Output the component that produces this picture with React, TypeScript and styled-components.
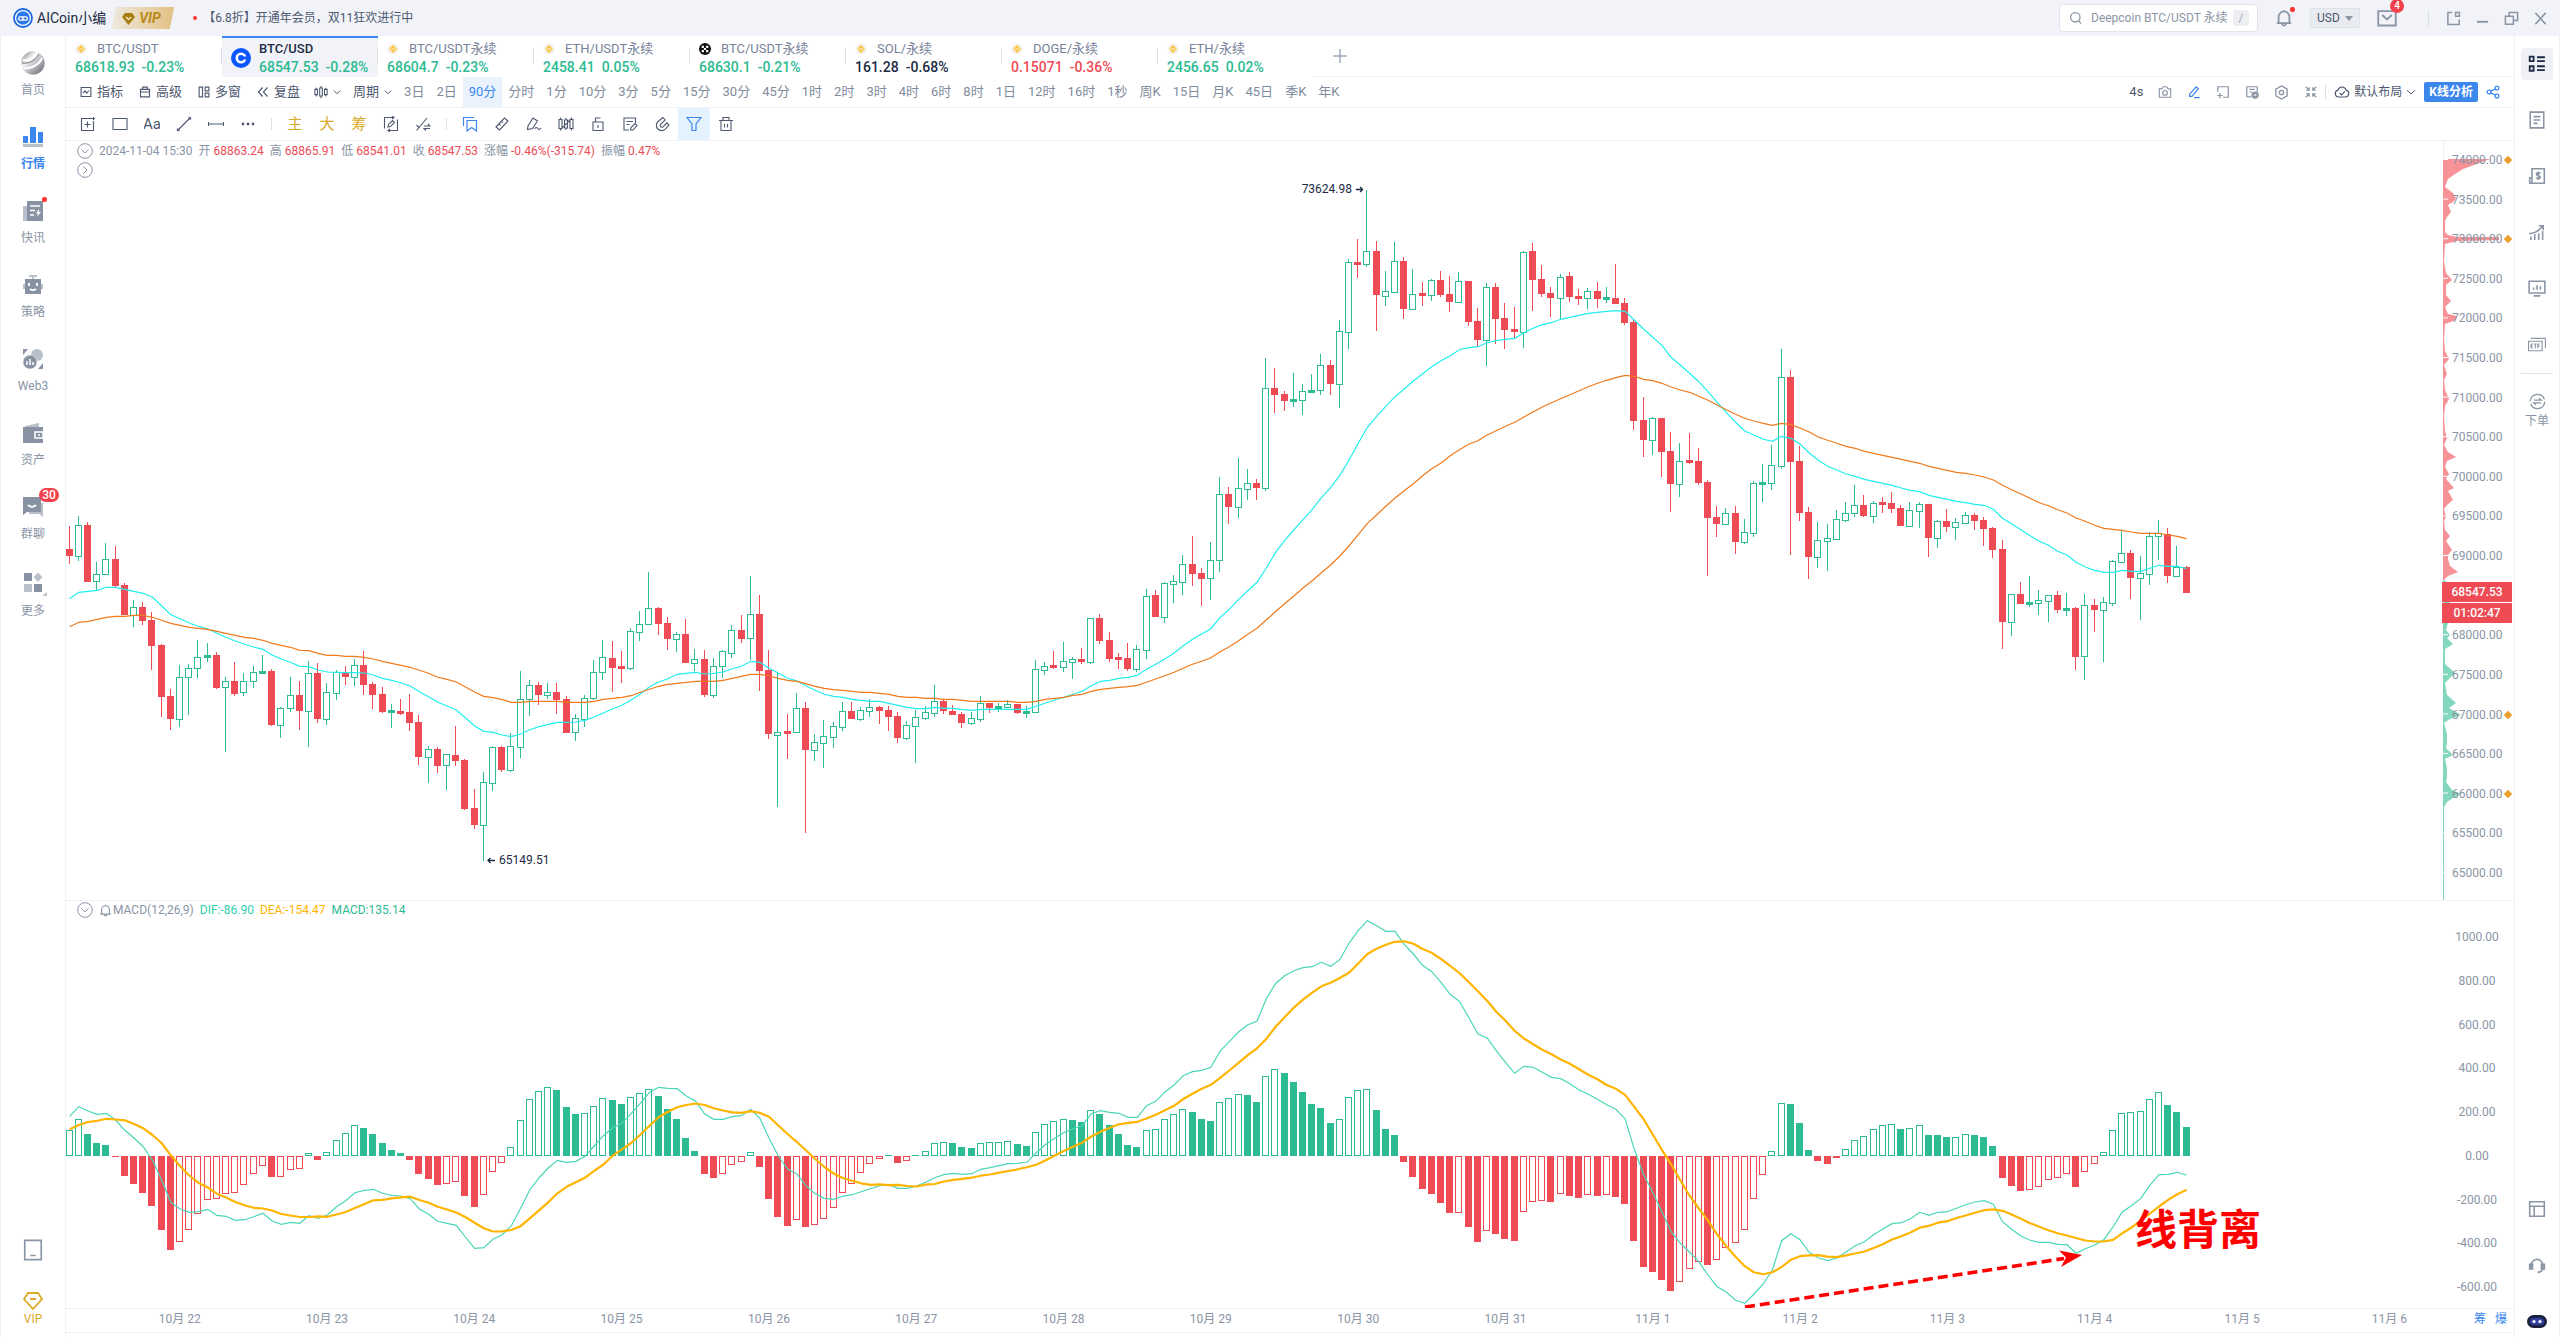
import React from 'react';
import styled, { createGlobalStyle } from 'styled-components';

const GlobalStyle = createGlobalStyle`
  *, *::before, *::after { box-sizing: border-box; }
  body {
    margin: 0;
    background: #fff;
    color: #4d5870;
    font-family: Roboto, "Noto Sans CJK SC", sans-serif;
    font-size: 12px;
    line-height: 16px;
  }
  button, input, select { font: inherit; color: inherit; }
  button { background: none; border: 0; padding: 0; cursor: pointer; white-space: nowrap; }
  svg { display: block; flex: none; }
`;

const C = {
  red: '#ee4b55',
  green: '#2cbb92',
  blue: '#3b87ee',
  grey: '#8a95a5',
  text: '#4d5870',
  dark: '#1c2b45',
  line: '#f0f1f4',
  bar: '#f2f3f8',
  gold: '#d9a928',
  orange: '#f07a1c',
  cyan: '#22eeee',
  amber: '#ffb400',
};

/* ------------------------------------------------------------------ */
/* Market data. Vertical values are in thirds of a pixel from `base`.  */
/* ------------------------------------------------------------------ */

type Segment = { base: number; rows: string; fast: string; slow: string };

const SEGMENTS: Segment[] = [
  {
    base: 500,
    rows: `r148 167 79 193|g76 167 49 182|r76 245 67 245|g223 244 186 270|g178 223 130 223|r178 257 139 265|r256 344 250 346|g322 344 300 381|r322 362 307 374|r361 437 337 510|r436 590 432 650|r589 656 568 690|g532 656 495 680|g505 532 493 644|g472 505 421 533|g466 472 430 486|r466 563 455 566|g544 562 532 755|r544 581 487 587|g544 577 519 587|g517 544 499 565|g514 518 465 518|r514 674 508 679|g625 674 621 713|g586 625 531 635|r586 632 543 689|g520 632 484 740|r520 656 489 668|g577 658 550 675|g517 580 511 599|r517 530 499 556|g496 530 478 559|r496 554 453 584|r553 584 546 626|r583 635 562 640|g631 635 612 683|r634 638 598 644|r637 668 582 692|r667 770 645 795|g748 772 739 848|r748 797 742 819|g763 794 763 869|r766 782 679 797|r781 926 778 930|r925 974 867 987|g847 974 817 1082|g742 848 739 874|r742 809 738 815|g739 809 699 815|g598 740 514 775|g556 598 541 648|r556 584 547 614|g577 584 550 598|r577 599 549 643|r598 698 588 698|g655 695 643 722|g595 656 584 680|g517 593 480 599|g472 517 420 540|r475 503 423 577|r499 503 453 549|g394 503 385 510|g373 395 334 422|g325 371 216 371|r325 371 321 404|r370 416 350 450|g403 418 396 456|r403 488 358 489|g478 488 447 513|r478 584 451 590|g499 584 475 595|g454 499 450 533|g391 458 375 473|r391 416 345 429|g343 415 229 480|r343 512 285 574|r511 701 449 716|g697 704 517 920|r694 698 643 776|g625 695 580 695|r625 749 606 1000|g727 749 702 782|g709 728 660 803|g679 710 667 744|g634 680 606 692|r634 656 606 657|g631 656 621 664|g622 632 598 651|r622 632 618 672|r631 650 619 694|r649 713 636 728|g676 713 662 720|g652 677 630 789|g637 653 619 660|g604 638 556 651|r604 632 598 643|r634 644 615 645|r643 668 637 684|g655 668 636 675|g610 656 589 666|r610 623 609 639|g619 623 609 636|g613 620 600 624|r613 638 612 643|g634 638 618 654|g508 635 480 636|g499 509 486 525|r496 500 454 507|g484 500 426 516|g478 485 472 536|r478 486 444 492|g355 485 354 492|r355 422 343 431|r421 476 396 486|r472 476 459 506|r475 506 428 513|g448 506 435 516|g289 449 268 477|r286 350 270 351|g250 350 246 369|g244 251 226 308|g193 245 166 285|r193 221 108 258|r220 236 204 318|g181 233 125 301`,
    fast: `296 277 274 271 262 262 268 274 280 292 317 344 356 369 379 386 400 412 423 433 441 448 465 477 487 499 500 510 516 517 518 518 519 525 535 541 548 558 575 590 607 618 630 653 678 694 697 705 710 702 689 680 673 667 667 666 661 651 639 626 616 600 582 560 546 536 523 520 517 522 520 516 506 499 484 487 505 519 535 542 557 571 583 589 592 598 601 604 604 610 616 622 626 626 622 625 625 629 631 628 628 628 628 628 628 619 610 600 592 583 574 557 544 541 535 532 526 508 493 477 459 437 418 402 386`,
    slow: `380 367 364 358 352 349 349 346 346 352 361 370 376 382 385 388 394 400 406 412 415 421 430 436 442 451 452 460 466 466 469 469 472 477 484 490 496 502 511 520 532 538 546 561 576 589 593 599 607 607 604 604 604 604 607 607 607 604 598 595 592 587 577 568 559 553 550 547 544 544 544 541 535 529 523 523 528 535 541 544 551 559 565 569 571 574 577 577 580 583 589 592 592 595 595 598 598 601 604 604 604 604 604 607 607 604 598 595 592 586 583 574 568 565 562 560 556 547 537 527 517 505 493 484 473`,
  },
  {
    base: 170,
    rows: `g973 1171 921 1205|r973 1010 951 1063|g955 1010 865 1043|g940 956 897 991|r939 953 927 991|g655 953 565 963|r655 674 595 728|r672 692 664 722|g688 692 610 710|g664 689 643 735|g661 665 613 668|g586 661 552 674|r586 641 571 674|g484 641 451 713|g277 485 268 536|r277 281 208 325|g244 281 60 290|r244 374 213 483|g364 377 304 407|g274 365 215 366|r274 416 262 446|g373 416 297 416|r370 374 336 407|g331 374 327 394|r331 374 304 380|r373 395 318 426|g334 395 307 397|r334 455 333 467|r454 509 414 530|g352 509 339 588|r352 446 339 521|r445 479 399 536|r478 486 411 503|g247 485 243 533|r244 329 220 422|r328 371 285 380|r370 383 351 441|g322 383 312 446|r319 380 307 396|r379 383 357 404|g364 383 354 416|r364 386 336 413|g382 386 351 398|r385 401 283 402|r400 458 384 465|r457 752 447 780|r751 809 681 861|g745 809 742 855|r745 845 744 921|r844 941 787 1025|g874 941 818 980|r871 875 790 881|r874 938 834 944|r937 1043 930 1218|r1042 1061 1007 1101|g1030 1061 1014 1063|r1030 1115 1008 1153`,
    fast: `1342 1318 1288 1262 1237 1195 1148 1112 1080 1049 1018 983 953 916 871 820 772 739 709 680 657 633 611 590 572 557 539 533 530 518 512 508 505 488 475 464 458 448 442 436 430 427 424 422 424 450 477 502 526 562 586 610 635 665 697 728 757`,
    slow: `1445 1430 1412 1393 1375 1350 1325 1301 1278 1254 1232 1208 1185 1158 1128 1094 1060 1035 1009 984 962 941 917 896 879 857 839 823 812 795 782 769 757 741 726 711 698 686 674 662 650 640 631 623 616 619 628 632 640 651 660 667 679 691 705 719 733`,
  },
  {
    base: 330,
    rows: `g607 635 568 641|g460 608 454 620|g457 461 402 515|g406 458 346 480|g142 407 56 416|r142 395 121 674|r394 548 349 572|r547 681 532 746|g631 681 577 713|g625 632 582 722|g568 627 540 630|g550 570 517 575|g526 548 466 560|r526 557 495 560|g520 557 512 580|r517 521 502 549|r520 536 487 549|r535 587 525 588|g541 587 516 588|g523 542 517 594|r523 623 522 680|g574 623 571 653|r574 590 538 606|g577 590 564 630|g556 578 546 578|r556 572 550 600|r571 597 562 648|r595 660 592 684|r658 876 630 956|g793 876 792 918|r793 822 757 822|g817 821 739 831|g811 818 781 856|g796 812 795 876|r796 839 784 850|g835 839 789 858|r835 981 831 1020|g826 977 792 1049|r826 839 808 906|g817 839 802 996|g694 818 691 827|g670 695 600 695|r670 744 660 806|g730 744 679 869|g619 731 607 765|g610 619 570 689|r612 738 595 759|g711 738 649 738|r711 789 709 789`,
    fast: `303 315 328 334 319 325 342 369 391 409 420 432 439 448 454 460 466 474 481 485 496 502 508 514 518 523 526 538 565 582 599 617 634 646 664 675 697 711 721 727 727 721 724 724 715 706 709 709 716`,
    slow: `265 273 280 286 280 284 294 306 321 331 340 349 355 364 370 376 382 388 394 400 409 415 421 427 430 435 441 450 466 479 492 505 518 527 539 549 564 574 586 595 598 601 606 610 610 610 615 619 626`,
  },
];

const HISTOGRAM = `77 110 66 39 33 -3 -60 -84 -111 -150 -222 -282 -257 -221 -173 -131 -130 -113 -110 -86 -53 -29 -63 -62 -41 -38 8 -12 11 47 68 92 84 66 39 18 8 -12 -54 -69 -87 -83 -77 -120 -153 -116 -47 -20 26 107 170 194 206 198 147 126 128 149 173 168 156 176 188 200 180 141 111 54 15 -54 -66 -53 -26 -17 11 -33 -129 -183 -210 -191 -213 -208 -188 -155 -110 -83 -50 -23 -8 3 -21 -14 3 14 38 41 39 27 24 38 41 42 44 36 30 71 95 104 110 109 102 137 126 93 66 33 27 77 81 110 125 140 132 111 105 161 173 185 183 162 240 260 249 222 192 156 144 99 110 176 197 200 138 81 63 -18 -62 -98 -113 -140 -171 -170 -212 -257 -224 -233 -249 -255 -167 -139 -136 -138 -115 -119 -125 -118 -120 -118 -123 -143 -255 -332 -347 -371 -404 -377 -340 -319 -326 -313 -275 -262 -223 -130 -58 14 158 157 99 18 -15 -24 -5 20 47 59 80 92 95 81 83 92 63 62 57 58 65 64 57 30 -65 -89 -104 -103 -94 -73 -67 -55 -92 -49 -23 11 77 128 131 134 170 191 153 132 87`
  .split(' ').map(Number);

const DIF = `119 148 135 125 128 108 77 54 28 -12 -72 -139 -159 -169 -167 -160 -178 -181 -193 -191 -182 -172 -195 -205 -199 -202 -179 -187 -177 -152 -134 -110 -103 -100 -112 -118 -120 -128 -159 -175 -196 -202 -208 -243 -277 -275 -250 -236 -209 -157 -102 -66 -36 -13 -19 -16 -1 30 61 85 98 127 158 191 206 203 202 180 165 126 110 110 118 121 140 113 53 0 -39 -53 -89 -113 -127 -130 -121 -116 -107 -98 -89 -86 -97 -97 -90 -79 -65 -56 -52 -55 -53 -40 -35 -29 -23 -22 -19 9 34 53 70 82 91 127 136 131 128 116 116 151 164 192 213 241 253 257 266 315 343 372 394 404 471 517 541 556 565 568 581 569 589 638 676 706 691 674 674 635 606 572 553 521 485 464 416 366 354 316 281 248 269 266 251 236 232 217 198 185 170 154 140 112 20 -55 -109 -167 -227 -262 -289 -317 -357 -392 -408 -433 -442 -414 -384 -342 -254 -233 -251 -289 -305 -314 -306 -288 -269 -257 -236 -219 -203 -200 -188 -169 -178 -169 -167 -157 -146 -138 -134 -145 -197 -220 -240 -253 -259 -259 -265 -266 -292 -278 -268 -251 -213 -168 -149 -128 -88 -56 -55 -49 -58`
  .split(' ').map(Number);

const PLOT_W = 2377;
const PRICE_H = 759;
const MACD_H = 407;
const PRICE_TOP = 141;
const ZERO_Y = 255;

const xAt = (i: number) => 3.1 + i * 9.2043;

const candles = SEGMENTS.flatMap(({ base, rows }) =>
  rows.split('|').map((row) => {
    const [top, bottom, high, low] = row.slice(1).split(' ').map((v) => Math.round(base - PRICE_TOP + Number(v) / 3));
    return { up: row[0] === 'g', top, bottom, high, low };
  }),
);

const average = (key: 'fast' | 'slow') =>
  SEGMENTS.flatMap((s) => s[key].split(' ').map((v) => s.base - PRICE_TOP + Number(v) / 3))
    .map((y, i) => `${(xAt(i) + 0.5).toFixed(1)},${y.toFixed(1)}`)
    .join(' ');

const macdLine = (values: number[]) =>
  values.map((v, i) => `${(xAt(i) + 0.5).toFixed(1)},${(ZERO_Y - v / 3).toFixed(1)}`).join(' ');

const PROFILE_SELL = `159 47 164 34 169 20 174 12 179 5 184 3 187 2 190 6 193 10 198 13 202 10 205 5 212 8 217 4 221 2 232 2 235 5 237 14 237 56 240 56 241 14 244 2 261 1 273 3 280 9 285 3 295 3 301 8 307 2 314 5 316 14 320 13 324 2 339 1 351 2 359 6 365 1 374 4 380 1 390 2 399 6 406 2 416 1 431 2 438 4 445 1 452 5 457 13 461 4 467 2 474 6 479 3 488 11 491 5 500 10 505 4 509 1 517 3 521 1 530 2 536 7 541 3 550 9 555 5 559 5 566 7 572 15 576 5 580 1`;
const PROFILE_BUY = `580 1 583 5 600 7 623 5 630 3 635 7 638 4 644 10 649 2 664 2 673 12 679 6 683 2 695 4 703 13 708 6 715 18 719 7 723 1 734 4 743 4 748 3 755 10 759 2 768 4 777 4 782 3 790 9 794 18 798 10 802 4 807 1 900 1`;

const profilePath = (src: string) => {
  const v = src.split(' ').map(Number);
  const pts: string[] = [];
  for (let i = 0; i < v.length; i += 2) pts.push(`${v[i + 1]} ${v[i] - PRICE_TOP}`);
  return `M0 ${v[0] - PRICE_TOP}L${pts.join('L')}L0 ${v[v.length - 2] - PRICE_TOP}Z`;
};

/* ------------------------------------------------------------------ */
/* Icons                                                               */
/* ------------------------------------------------------------------ */

const ICONS: Record<string, React.ReactNode> = {
  search: <><circle cx="7.2" cy="7.2" r="5.4" /><path d="M11 11.4l3 3" /></>,
  bell: <path d="M1.5 12.5h13M3.2 12.5V7a4.8 4.8 0 0 1 9.6 0v5.5M8 2.2V1M6.2 13.4a1.9 1.9 0 0 0 3.6 0" />,
  mail: <path d="M1 2.5h14v11.5H1zM4.2 5.6L8 9.2l3.8-3.6" />,
  popout: <path d="M6.5 1.5H2v13h12V9M10.2 1.5h4v4h-4z" />,
  minimize: <path d="M2 11.5h12" strokeWidth="2" />,
  restore: <path d="M1.5 5.5H10V14H1.5zM5.5 5.5v-4h9V10h-4" />,
  close: <path d="M2.5 2l11 12M13.5 2l-11 12" />,
  indicator: <path d="M1.5 2h13v12h-13zM4 9.5l2.5-3 2.5 3 3-3.5" />,
  advanced: <path d="M5 4V1.5h6V4M2 4.5h12v10H2zM2 8h12" />,
  windows: <path d="M1.5 1.5H6v13H1.5zM9.5 1.5h5v5h-5zM9.5 9.5h5v5h-5z" />,
  replay: <path d="M7.5 2L2 8l5.5 6M14 2L8.5 8l5.500 6" />,
  candles: <path d="M2.5 3v2M2.5 11v2M1 5h3v6H1zM8 1v2.5M8 12.5V15M6.5 3.5h3v9h-3zM13.5 3v2M13.5 11v2M12 5h3v6h-3z" />,
  chevron: <path d="M1.5 5L8 11.500 14.500 5" strokeWidth="2" />,
  chevronThin: <path d="M1.5 5L8 11l6.500-6" strokeWidth="1.5" />,
  camera: <><path d="M1.5 4.5h3L6 2h4l1.500 2.500h3V14h-13z" /><circle cx="8" cy="9" r="2.7" /></>,
  pencil: <path d="M3 10.5L10.5 2 13 4.200 5.700 13H3zM8 14.500h6.500" />,
  selection: <path d="M2 8V2h12v12H8M4.500 9v6M1.500 12h6" />,
  orders: <><path d="M2 13.500V2h12v6M5 5h6M5 8h3M2 13.500h5" /><circle cx="11.5" cy="11.5" r="3.5" fill="currentColor" /><path d="M10 11.500h3" stroke="#fff" /></>,
  settings: <><path d="M8 1l6 3.500v7L8 15l-6-3.500v-7z" /><circle cx="8" cy="8" r="2.3" /></>,
  compress: <path d="M2 2l4 4M6 2.500V6H2.500M14 2l-4 4M10 2.500V6h3.500M2 14l4-4M6 13.500V10H2.500M14 14l-4-4M10 13.500V10h3.500" />,
  cloud: <path d="M4.500 13a3.500 3.500 0 0 1-.5-6.900 4.200 4.200 0 0 1 8.100 0 3.500 3.500 0 0 1-.6 6.900zM5.500 8.800l2 2 3.500-3.500" />,
  share: <><circle cx="3.5" cy="8" r="2.2" /><circle cx="12.5" cy="3.5" r="2.2" /><circle cx="12.5" cy="12.5" r="2.2" /><path d="M5.500 7l5-2.500M5.500 9l5 2.500" /></>,
  tSelect: <path d="M13.500 5V14.500H1.500V2.500H11M7.500 5.500v6M4.500 8.500h6M11 2.500h4M13.500 1v3" />,
  tRect: <path d="M1 2.500h14v11H1z" />,
  tText: <text x="-1" y="13" fontSize="15" fill="currentColor" stroke="none">Aa</text>,
  tLine: <><path d="M3 13L13 3" /><circle cx="2.2" cy="13.8" r="1" /><circle cx="13.8" cy="2.2" r="1" /></>,
  tRange: <path d="M.5 6v4M15.500 6v4M.5 8h15" />,
  tMore: <><circle cx="3" cy="8" r="1.4" fill="currentColor" stroke="none" /><circle cx="8" cy="8" r="1.4" fill="currentColor" stroke="none" /><circle cx="13" cy="8" r="1.4" fill="currentColor" stroke="none" /></>,
  tRedraw: <path d="M1.500 12.500V1.500H11M9 0l2 1.500L9 3M14.500 3.500v11H5M7 13l-2 1.500L7 16M5 11l.7-2.800L9.500 4.500l2 2-3.800 3.800z" />,
  tSwap: <path d="M1.500 14.500L12 2M1.500 9l3 3M9 10h6l-2-2M15 12.500H9l2 2" />,
  tLayers: <path d="M1.500 10V1.500H12M5 4.500h9.500V15L9.700 11.500 5 15z" />,
  tRuler: <path d="M2 11L10.500 2l3.500 3-8.500 9zM5 8l1.500 1.300M7.500 5.300L9 6.600" />,
  tMark: <path d="M1.500 13.500L2 10l5-8 4.500 3-5 7.500zM8.500 13c1-2 2.200-2 3.200-.5s2.300 1 3.300-.5" />,
  tKline: <path d="M2.500 1.500v2M2.500 12.500v2M1 3.500h3v9H1zM8 2v2M8 12v2M6.500 4h3v8h-3zM13.500 1.500v2M13.500 12.500v2M12 3.500h3v9h-3zM3 13L13 3" />,
  tUnlock: <path d="M3 6h10v8.500H3zM5.500 6V2h5M8 9v3" />,
  tNote: <path d="M13.500 7V2H2v12h5M4.500 5.500h6.500M4.500 8.500h3M8.500 14l.5-2.500 4-4 2 2-4 4.500z" />,
  tMagnet: <path d="M9 1.500L4 5.500a5.300 5.300 0 0 0 7.300 7.700L15 9l-2.200-2.200-3.800 4a1.700 1.700 0 0 1-2.400-2.400l4.500-4.500zM9 1.500l2.100 2.400" />,
  tFilter: <path d="M1 1.500h14L10 8v6.500H6V8z" />,
  tTrash: <path d="M1 4.500h14M5 4.500V1.500h6v3M3 4.500v10h10v-10M6.500 8v3.500M9.500 8v3.500" />,
  rList: <path d="M1.500 1.500H5v4H1.500zM1.500 10H5v4H1.500zM8 2h7M8 5.500h7M8 10h7M8 13.500h7" strokeWidth="1.6" />,
  rDoc: <path d="M2 1h12v14H2zM5 5h6M5 8h6M5 11h3.500" />,
  rDollar: <path d="M3.500 12V1.500h11v13H1.500v-5h2M3.500 14.500v-3M11 5.800c-.5-.8-3.600-1-3.600.6 0 1.700 3.600.9 3.600 2.600 0 1.500-3 1.500-3.700.4M9.200 4v7.500" />,
  rGrowth: <path d="M2.500 15v-3M6 15v-5M9.500 15V9M13 15V7M1 9.500c5-.5 9-2.500 12-7M9.500 2.500h4v4" />,
  rMonitor: <path d="M1 2h14v10.500H1zM5 15h6M5 9.500v-2M8 9.500V5.500M11 9.500v-3" />,
  rEtf: <path d="M.5 5.500h12V14H.5zM2.500 3h13v8.500M2.700 8v3.500M2.700 8h1.600M2.700 9.700h1.600M2.700 11.500h1.600M5.300 8h2.400M6.500 8v3.700M8.700 8v3.700M8.700 8h1.700M8.700 9.700h1.500" strokeWidth="1" />,
  rTrade: <><circle cx="8" cy="8" r="6.8" strokeDasharray="19 2.4" /><path d="M4.500 6.700h7L9.500 5M11.500 9.300h-7l2 1.700" /></>,
  rLayout: <path d="M1.500 1.500h13v13h-13zM1.500 5.500h13M5.500 5.500v9" />,
  rHeadset: <path d="M3 10.500V8a5 5 0 0 1 10 0v2.500M1.500 7.500H4v4H1.500zM12 7.500h2.500v4H12zM12.500 11.500c0 2-1.500 3-4 3" />,
  phone: <path d="M2 1h12v14H2zM6 12h4" />,
};

const Svg = styled.svg`
  fill: none;
  stroke: currentColor;
`;

function Icon({ name, size = 16, weight = 1.2 }: { name: string; size?: number; weight?: number }) {
  return (
    <Svg width={size} height={size} viewBox="0 0 16 16" strokeWidth={weight} aria-hidden="true">
      {ICONS[name]}
    </Svg>
  );
}

/* ------------------------------------------------------------------ */
/* Top bar                                                             */
/* ------------------------------------------------------------------ */

const Page = styled.div`
  display: flex;
  flex-direction: column;
  height: 100vh;
  min-height: 800px;
  overflow: hidden;
`;

const TopBar = styled.header`
  display: flex;
  align-items: center;
  flex: none;
  height: 36px;
  padding: 0 12px 0 13px;
  background: ${C.bar};
`;

const UserName = styled.span`
  margin: 0 5px 0 4px;
  color: ${C.dark};
  font-size: 14px;
`;

const VipBadge = styled.a`
  display: flex;
  align-items: center;
  gap: 4px;
  width: 63px;
  height: 22px;
  padding-left: 11px;
  color: #b98c1d;
  font-size: 14px;
  font-weight: 700;
  font-style: italic;
  text-decoration: none;
  background: linear-gradient(90deg, #eeeae0, #e3c083);
  clip-path: polygon(8% 0, 100% 0, 93% 100%, 0 100%);
`;

const Notice = styled.p`
  display: flex;
  align-items: center;
  flex: 1;
  gap: 6px;
  margin: 0 0 0 19px;
  &::before {
    content: '';
    width: 4px;
    height: 4px;
    border-radius: 50%;
    background: #f33;
  }
`;

const Actions = styled.div`
  display: flex;
  align-items: center;
  gap: 17px;
  color: ${C.grey};
`;

const Search = styled.label`
  display: flex;
  align-items: center;
  width: 199px;
  height: 28px;
  padding: 0 8px 0 9px;
  border: 1px solid #e0e3e8;
  border-radius: 4px;
  background: #fff;
`;

const SearchInput = styled.input`
  flex: 1;
  min-width: 0;
  margin: 0 2px 0 8px;
  padding: 0;
  border: 0;
  outline: 0;
  background: none;
  &::placeholder { color: ${C.grey}; opacity: 1; }
`;

const Key = styled.kbd`
  width: 16px;
  height: 16px;
  border-radius: 2px;
  background: #eceef2;
  color: #a5adba;
  font: 12px/16px Roboto, sans-serif;
  text-align: center;
`;

const IconButton = styled.button<{ $tone?: string }>`
  position: relative;
  display: flex;
  align-items: center;
  justify-content: center;
  color: ${(p) => p.$tone || C.grey};
`;

const Dot = styled.i`
  position: absolute;
  top: -2px;
  right: -2px;
  width: 5px;
  height: 5px;
  border-radius: 2px;
  background: #f33;
`;

const Count = styled.b<{ $wide?: boolean }>`
  position: absolute;
  top: ${(p) => (p.$wide ? -7 : -9)}px;
  right: ${(p) => (p.$wide ? -14 : -7)}px;
  width: ${(p) => (p.$wide ? 20 : 14)}px;
  height: 14px;
  border-radius: 7px;
  background: #f5414c;
  color: #fff;
  font-size: ${(p) => (p.$wide ? 12 : 10)}px;
  font-weight: 500;
  line-height: 14px;
  text-align: center;
`;

const CurrencyWrap = styled.span`
  position: relative;
  width: 50px;
  color: ${C.text};
  &::after {
    content: '';
    position: absolute;
    right: 7px;
    top: 8px;
    border: 4px solid transparent;
    border-top: 5px solid ${C.grey};
    border-bottom: 0;
    pointer-events: none;
  }
`;

const Currency = styled.select`
  display: block;
  width: 100%;
  height: 20px;
  padding: 0 0 0 6px;
  border: 1px solid #dfe2e8;
  border-radius: 0;
  background: #e9ebf0;
  appearance: none;
`;

const Divider = styled.i<{ $shift?: number }>`
  width: 1px;
  height: 16px;
  margin-left: ${(p) => p.$shift || 0}px;
  background: #dcdfe5;
`;

const WindowControls = styled.div`
  display: flex;
  align-items: center;
  gap: 14px;
`;

function Logo() {
  return (
    <svg width="20" height="20" viewBox="0 0 20 20" aria-hidden="true">
      <circle cx="10" cy="10" r="9" fill="#fff" stroke="#1c66e0" strokeWidth="1.8" />
      <circle cx="10" cy="10" r="6.8" fill="#2a78ee" />
      <rect x="5" y="8" width="10" height="5" rx="2.5" fill="#cfe2ff" />
      <circle cx="7.8" cy="10.5" r="1" fill="#1c4fb0" />
      <circle cx="12.2" cy="10.5" r="1" fill="#1c4fb0" />
    </svg>
  );
}

function Header() {
  return (
    <TopBar>
      <Logo />
      <UserName>AICoin小编</UserName>
      <VipBadge href="#vip">
        <svg width="13" height="13" viewBox="0 0 13 13" aria-hidden="true">
          <path d="M3 1h7l3 4-6.500 8L0 5z" fill="#a87b10" />
          <path d="M4 5l2.500 2.500L9 5" fill="none" stroke="#f3e3bd" strokeWidth="1.5" />
        </svg>
        VIP
      </VipBadge>
      <Notice>【6.8折】开通年会员，双11狂欢进行中</Notice>
      <Actions>
        <Search>
          <Icon name="search" size={14} weight={1.5} />
          <SearchInput placeholder="Deepcoin BTC/USDT 永续" aria-label="搜索" />
          <Key>/</Key>
        </Search>
        <IconButton aria-label="通知"><Icon name="bell" size={18} weight={1.6} /><Dot /></IconButton>
        <CurrencyWrap>
          <Currency aria-label="货币"><option>USD</option></Currency>
        </CurrencyWrap>
        <IconButton aria-label="消息"><Icon name="mail" size={20} weight={1.5} /><Count>4</Count></IconButton>
        <Divider $shift={14} />
        <WindowControls>
          {['popout', 'minimize', 'restore', 'close'].map((n) => (
            <IconButton key={n} aria-label={n}><Icon name={n} size={15} weight={1.6} /></IconButton>
          ))}
        </WindowControls>
      </Actions>
    </TopBar>
  );
}

/* ------------------------------------------------------------------ */
/* Side rails                                                          */
/* ------------------------------------------------------------------ */

const Body = styled.div`
  display: flex;
  flex: 1;
  min-height: 0;
  border-left: 1px solid ${C.line};
`;

const Sidebar = styled.nav`
  display: flex;
  flex-direction: column;
  flex: none;
  width: 65px;
  padding: 1px 0 10px;
  border-right: 1px solid ${C.line};
`;

const NavItem = styled.a<{ $active?: boolean; $last?: boolean }>`
  display: flex;
  flex-direction: column;
  align-items: center;
  gap: 7px;
  height: 74px;
  margin-top: ${(p) => (p.$last ? 3 : 0)}px;
  padding-top: 14px;
  color: ${(p) => (p.$active ? C.blue : C.grey)};
  font-weight: ${(p) => (p.$active ? 700 : 400)};
  text-decoration: none;
`;

const NavIcon = styled.span`
  position: relative;
  display: flex;
  align-items: center;
  justify-content: center;
  width: 24px;
  height: 24px;
`;

const SidebarFoot = styled.div`
  display: flex;
  flex-direction: column;
  align-items: center;
  gap: 31px;
  margin-top: auto;
  color: ${C.grey};
`;

const VipLink = styled.a`
  display: flex;
  flex-direction: column;
  align-items: center;
  gap: 1px;
  color: ${C.gold};
  text-decoration: none;
`;

const G = '#8793a3';
const L = '#b9c0ca';

const NAV: { label: string; art: React.ReactNode; active?: boolean; dot?: boolean; count?: number }[] = [
  {
    label: '首页',
    art: (
      <svg width="24" height="24" viewBox="0 0 24 24" aria-hidden="true">
        <defs>
          <linearGradient id="ball" x1="0" y1="0" x2="1" y2="1">
            <stop offset="0" stopColor="#75757c" /><stop offset=".35" stopColor="#f4f4f5" />
            <stop offset=".6" stopColor="#b4b4ba" /><stop offset="1" stopColor="#606068" />
          </linearGradient>
        </defs>
        <circle cx="12" cy="12" r="11.7" fill="url(#ball)" />
        <path d="M2 9C8 10 14 7 16 1.500M3 17c7 1 15-3 18-10" fill="none" stroke="#fff" strokeWidth="2" />
        <path d="M1 12c7 1 13-2 17-9" fill="none" stroke="#77777f" strokeWidth="1" />
      </svg>
    ),
  },
  {
    label: '行情', active: true,
    art: <svg width="20" height="20" viewBox="0 0 20 20" aria-hidden="true"><path d="M0 9h5v7H0zM7 0h6v16H7zM15 5h5v11h-5z" fill={C.blue} /><path d="M0 17h20v3H0z" fill={L} /></svg>,
  },
  {
    label: '快讯', dot: true,
    art: <svg width="20" height="20" viewBox="0 0 20 20" aria-hidden="true"><path d="M0 5h4v15H0z" fill={L} /><path d="M4 0h16v20H4z" fill={G} /><path d="M7 5h10M7 9.500h5M7 14h4" stroke="#fff" strokeWidth="1.5" /><path d="M16 8l-3 4.500h2L14 16l4-5h-2z" fill="#fff" /></svg>,
  },
  {
    label: '策略',
    art: <svg width="20" height="20" viewBox="0 0 20 20" aria-hidden="true"><path d="M6 0h8v2H6zM9 2h2v2H9zM0 9h2v5H0zM18 9h2v5h-2z" fill={L} /><path d="M2 4h16v15H2z" fill={G} /><path d="M6 8v3M14 8v3M7 14c2 1.500 4 1.500 6 0" stroke="#fff" strokeWidth="1.8" fill="none" /></svg>,
  },
  {
    label: 'Web3',
    art: <svg width="20" height="20" viewBox="0 0 20 20" aria-hidden="true"><circle cx="14" cy="6" r="6" fill={L} /><circle cx="7" cy="13" r="7" fill={G} stroke="#fff" strokeWidth=".5" /><path d="M4 12v4M7 10v6M10 13v3" stroke="#fff" strokeWidth="1.5" /><path d="M0 0h5L0 6zM20 20h-5l5-6z" fill={G} /></svg>,
  },
  {
    label: '资产',
    art: <svg width="20" height="20" viewBox="0 0 20 20" aria-hidden="true"><path d="M2 3L16 0v4H2z" fill={L} /><path d="M0 4h20v16H0z" fill={G} /><path d="M12 9h8v6h-8z" fill={G} stroke="#fff" strokeWidth="1.5" /><circle cx="16" cy="12" r="1" fill="#fff" /></svg>,
  },
  {
    label: '群聊', count: 30,
    art: <svg width="20" height="20" viewBox="0 0 20 20" aria-hidden="true"><path d="M6 6h14v14l-4-3H6z" fill={L} /><path d="M0 0h18v15H4l-4 3z" fill={G} /><path d="M5 8c2.500 2.500 5.500 2.500 8 0" stroke="#fff" strokeWidth="1.8" fill="none" /></svg>,
  },
  {
    label: '更多',
    art: <svg width="28" height="24" viewBox="-4 0 28 24" aria-hidden="true"><path d="M1 1h8v8H1zM11 12h8v8h-8z" fill={G} /><path d="M1 12h8v8H1zM15 .5l4.500 4.700L15 10l-4.500-4.800zM24 20v4h-5z" fill={L} /></svg>,
  },
];

function LeftNav() {
  return (
    <Sidebar>
      {NAV.map((n, i) => (
        <NavItem key={n.label} href="#nav" $active={n.active} $last={i === NAV.length - 1}>
          <NavIcon>
            {n.art}
            {n.dot && <Dot />}
            {n.count && <Count $wide>{n.count}</Count>}
          </NavIcon>
          {n.label}
        </NavItem>
      ))}
      <SidebarFoot>
        <IconButton aria-label="手机"><Icon name="phone" size={22} /></IconButton>
        <VipLink href="#vip">
          <svg width="20" height="18" viewBox="0 0 20 18" aria-hidden="true">
            <path d="M5 1h10l4 6-9 10L1 7zM7 7h6" fill="none" stroke={C.gold} strokeWidth="1.8" />
          </svg>
          VIP
        </VipLink>
      </SidebarFoot>
    </Sidebar>
  );
}

const Rail = styled.aside`
  display: flex;
  flex-direction: column;
  align-items: center;
  flex: none;
  width: 46px;
  padding: 12px 0 0;
  border-left: 1px solid ${C.line};
  border-right: 1px solid ${C.line};
`;

const RailGroup = styled.div`
  display: flex;
  flex-direction: column;
  align-items: center;
  gap: 24px;
`;

const RailButton = styled.button<{ $active?: boolean }>`
  display: flex;
  align-items: center;
  justify-content: center;
  width: 32px;
  height: 32px;
  border-radius: 4px;
  background: ${(p) => (p.$active ? '#f0f1f6' : 'none')};
  color: ${(p) => (p.$active ? C.dark : C.grey)};
`;

const RailTrade = styled.button`
  display: flex;
  flex-direction: column;
  align-items: center;
  gap: 3px;
  width: 32px;
  margin: 13px 0 auto;
  padding-top: 19px;
  border-top: 1px solid #dfe2e7;
  color: ${C.grey};
`;

function RightRail() {
  return (
    <Rail>
      <RailGroup>
        {['rList', 'rDoc', 'rDollar', 'rGrowth', 'rMonitor', 'rEtf'].map((n, i) => (
          <RailButton key={n} $active={i === 0} aria-label={n}>
            <Icon name={n} size={18} weight={1.4} />
          </RailButton>
        ))}
      </RailGroup>
      <RailTrade><Icon name="rTrade" size={17} />下单</RailTrade>
      <RailGroup>
        <RailButton aria-label="布局"><Icon name="rLayout" size={18} weight={1.4} /></RailButton>
        <RailButton aria-label="客服"><Icon name="rHeadset" size={18} weight={1.5} /></RailButton>
        <RailButton aria-label="助手">
          <svg width="22" height="18" viewBox="0 0 22 18">
            <rect x="1" y="3" width="20" height="13" rx="6.5" fill="#1b2140" />
            <rect x="4" y="6" width="14" height="7" rx="3.5" fill="#3340a0" />
            <circle cx="8" cy="9.5" r="1.6" fill="#fff" /><circle cx="14" cy="9.5" r="1.6" fill="#fff" />
          </svg>
        </RailButton>
      </RailGroup>
    </Rail>
  );
}

/* ------------------------------------------------------------------ */
/* Symbol tabs and toolbars                                            */
/* ------------------------------------------------------------------ */

const Main = styled.main`
  display: flex;
  flex-direction: column;
  flex: 1;
  min-width: 0;
`;

const TabBar = styled.div`
  display: flex;
  flex: none;
  height: 41px;
`;

const Tab = styled.button<{ $active?: boolean }>`
  position: relative;
  display: flex;
  align-items: center;
  gap: 8px;
  width: 156px;
  padding: 0 0 0 9px;
  border-top: 2px solid ${(p) => (p.$active ? C.blue : 'transparent')};
  background: ${(p) => (p.$active ? C.bar : 'none')};
  text-align: left;
  &:not(:last-of-type)::after {
    content: '';
    position: absolute;
    right: 0;
    top: 10px;
    width: 1px;
    height: 16px;
    background: #dcdfe5;
  }
`;

const TabText = styled.span`
  display: flex;
  flex-direction: column;
  gap: 2px;
`;

const TabName = styled.span<{ $active?: boolean }>`
  display: flex;
  align-items: center;
  gap: 10px;
  color: ${(p) => (p.$active ? C.dark : '#78839a')};
  font-size: 13px;
  font-weight: ${(p) => (p.$active ? 500 : 400)};
`;

const Quote = styled.span<{ $color: string }>`
  display: flex;
  gap: 7px;
  color: ${(p) => p.$color};
  font-size: 14px;
  font-weight: 500;
`;

const TabRest = styled.div`
  display: flex;
  align-items: center;
  flex: 1;
  padding-left: 19px;
  border-bottom: 1px solid ${C.line};
`;

const TABS = [
  ['BTC/USDT', '68618.93', '-0.23%', C.green, 'bnb'],
  ['BTC/USD', '68547.53', '-0.28%', C.green, 'coinbase'],
  ['BTC/USDT永续', '68604.7', '-0.23%', C.green, 'bnb'],
  ['ETH/USDT永续', '2458.41', '0.05%', C.green, 'bnb'],
  ['BTC/USDT永续', '68630.1', '-0.21%', C.green, 'okx'],
  ['SOL/永续', '161.28', '-0.68%', C.dark, 'bnb'],
  ['DOGE/永续', '0.15071', '-0.36%', C.red, 'bnb'],
  ['ETH/永续', '2456.65', '0.02%', C.green, 'bnb'],
];

function ExchangeIcon({ kind }: { kind: string }) {
  if (kind === 'coinbase') {
    return (
      <svg width="20" height="20" viewBox="0 0 20 20" aria-hidden="true">
        <circle cx="10" cy="10" r="10" fill="#0a56ff" />
        <circle cx="10" cy="10" r="4.2" fill="none" stroke="#fff" strokeWidth="2.6" />
        <path d="M11.500 8.500h5v3h-5z" fill="#0a56ff" />
      </svg>
    );
  }
  if (kind === 'okx') {
    return (
      <svg width="12" height="12" viewBox="0 0 12 12" aria-hidden="true">
        <circle cx="6" cy="6" r="6" fill="#111" />
        <path d="M2.700 2.700h2.200v2.200H2.700zM7.100 2.700h2.200v2.200H7.100zM4.900 4.900h2.200v2.200H4.900zM2.700 7.100h2.200v2.200H2.700zM7.100 7.100h2.200v2.200H7.100z" fill="#fff" />
      </svg>
    );
  }
  return (
    <svg width="12" height="12" viewBox="0 0 12 12" aria-hidden="true">
      <circle cx="6" cy="6" r="6" fill="#f5f5f6" />
      <path d="M6 1.800L10.200 6 6 10.200 1.800 6z" fill="#f8c84e" />
      <path d="M3.500 6h5" stroke="#fde6ad" strokeWidth="1.4" />
    </svg>
  );
}

const Toolbar = styled.div`
  display: flex;
  flex: none;
  height: 31px;
  padding: 0 14px 0 6px;
  border-bottom: 1px solid ${C.line};
  font-size: 13px;
`;

const MenuButton = styled.button<{ $pad: number }>`
  display: flex;
  align-items: center;
  gap: 5px;
  padding: 0 ${(p) => p.$pad}px;
`;

const Period = styled.button<{ $active?: boolean }>`
  padding: 0 6px;
  color: ${(p) => (p.$active ? C.blue : '#808b9c')};
  background: ${(p) => (p.$active ? '#eaf3fd' : 'none')};
`;

const ToolbarEnd = styled.div`
  display: flex;
  align-items: center;
  gap: 15px;
  margin-left: auto;
`;

const LayoutGroup = styled.div`
  display: flex;
  align-items: center;
  gap: 8px;
  font-size: 12px;
`;

const LayoutButton = styled.button`
  display: flex;
  align-items: center;
  gap: 4px;
  color: ${C.text};
`;

const Analyze = styled.button`
  height: 20px;
  padding: 0 5px;
  border-radius: 2px;
  background: ${C.blue};
  color: #fff;
  font-weight: 700;
`;

const ToolRow = styled.div`
  display: flex;
  align-items: stretch;
  flex: none;
  height: 33px;
  padding-left: 6px;
  border-bottom: 1px solid ${C.line};
`;

const Tool = styled.button<{ $on?: boolean; $tone?: string }>`
  display: flex;
  align-items: center;
  justify-content: center;
  width: 32px;
  font-size: 15px;
  color: ${(p) => p.$tone || C.text};
  background: ${(p) => (p.$on ? '#e4f2fe' : 'none')};
`;

const ToolGap = styled.i`
  align-self: center;
  width: 1px;
  height: 12px;
  margin: 0 7px;
  background: #dcdfe5;
`;

const PERIODS = '3日 2日 90分 分时 1分 10分 3分 5分 15分 30分 45分 1时 2时 3时 4时 6时 8时 1日 12时 16时 1秒 周K 15日 月K 45日 季K 年K'.split(' ');

function Toolbars() {
  return (
    <>
      <TabBar>
        {TABS.map(([name, price, change, color, kind]) => {
          const active = kind === 'coinbase';
          return (
            <Tab key={name + price} $active={active}>
              {active && <ExchangeIcon kind={kind} />}
              <TabText>
                <TabName $active={active}>{!active && <ExchangeIcon kind={kind} />}{name}</TabName>
                <Quote $color={color}><span>{price}</span><span>{change}</span></Quote>
              </TabText>
            </Tab>
          );
        })}
        <TabRest>
          <IconButton aria-label="添加">
            <svg width="14" height="14" viewBox="0 0 14 14"><path d="M7 0v14M0 7h14" stroke="#78839a" /></svg>
          </IconButton>
        </TabRest>
      </TabBar>
      <Toolbar>
        <MenuButton $pad={8}><Icon name="indicator" size={12} weight={1.5} />指标</MenuButton>
        <MenuButton $pad={8}><Icon name="advanced" size={12} weight={1.5} />高级</MenuButton>
        <MenuButton $pad={8}><Icon name="windows" size={12} weight={1.5} />多窗</MenuButton>
        <MenuButton $pad={8}><Icon name="replay" size={12} weight={1.5} />复盘</MenuButton>
        <MenuButton $pad={6} aria-label="图表类型"><Icon name="candles" size={14} /><Icon name="chevron" size={8} /></MenuButton>
        <MenuButton $pad={6}>周期<Icon name="chevron" size={8} /></MenuButton>
        {PERIODS.map((p) => <Period key={p} $active={p === '90分'}>{p}</Period>)}
        <ToolbarEnd>
          <span>4s</span>
          <IconButton aria-label="截图"><Icon name="camera" size={14} weight={1.3} /></IconButton>
          <IconButton $tone={C.blue} aria-label="画线"><Icon name="pencil" size={14} weight={1.4} /></IconButton>
          <IconButton aria-label="框选"><Icon name="selection" size={14} weight={1.4} /></IconButton>
          <IconButton aria-label="订单"><Icon name="orders" size={14} weight={1.4} /></IconButton>
          <IconButton aria-label="设置"><Icon name="settings" size={15} weight={1.4} /></IconButton>
          <IconButton aria-label="收起"><Icon name="compress" size={14} weight={1.3} /></IconButton>
          <LayoutGroup>
            <Divider $shift={-8} />
            <LayoutButton><Icon name="cloud" size={16} />默认布局<Icon name="chevronThin" size={10} /></LayoutButton>
            <Analyze>K线分析</Analyze>
            <IconButton $tone={C.blue} aria-label="分享"><Icon name="share" size={14} weight={1.4} /></IconButton>
          </LayoutGroup>
        </ToolbarEnd>
      </Toolbar>
      <ToolRow>
        {['tSelect', 'tRect', 'tText', 'tLine', 'tRange', 'tMore'].map((n) => <Tool key={n} aria-label={n}><Icon name={n} weight={1.1} /></Tool>)}
        <ToolGap />
        {['主', '大', '筹'].map((t) => <Tool key={t} $tone={C.gold}>{t}</Tool>)}
        {['tRedraw', 'tSwap'].map((n) => <Tool key={n} aria-label={n}><Icon name={n} weight={1.1} /></Tool>)}
        <ToolGap />
        <Tool $tone={C.blue} aria-label="tLayers"><Icon name="tLayers" /></Tool>
        {['tRuler', 'tMark', 'tKline', 'tUnlock', 'tNote', 'tMagnet'].map((n) => <Tool key={n} aria-label={n}><Icon name={n} weight={1.1} /></Tool>)}
        <Tool $on $tone={C.blue} aria-label="tFilter"><Icon name="tFilter" /></Tool>
        <Tool aria-label="tTrash"><Icon name="tTrash" weight={1.1} /></Tool>
      </ToolRow>
    </>
  );
}

/* ------------------------------------------------------------------ */
/* Charts                                                              */
/* ------------------------------------------------------------------ */

const Pane = styled.section<{ $share: number }>`
  display: grid;
  grid-template-columns: minmax(0, 1fr) 71px;
  flex: ${(p) => p.$share} 1 0;
  min-height: 0;
  border-bottom: 1px solid ${C.line};
  box-sizing: content-box;
`;

const Plot = styled.div`
  position: relative;
  min-height: 0;
`;

const PlotSvg = styled.svg`
  position: absolute;
  inset: 0;
  width: 100%;
  height: 100%;
`;

const Legend = styled.div<{ $top: number }>`
  position: relative;
  display: flex;
  flex-direction: column;
  align-items: flex-start;
  gap: 3px;
  padding: ${(p) => p.$top}px 0 0 11px;
`;

const LegendLine = styled.div`
  display: flex;
  align-items: center;
  gap: 6px;
  color: ${C.grey};
`;

const Value = styled.span<{ $color: string }>`
  margin-left: 3px;
  color: ${(p) => p.$color};
`;

const Series = styled.span<{ $color: string }>`
  color: ${(p) => p.$color};
`;

const Title = styled.span`
  display: flex;
  align-items: center;
  gap: 1px;
`;

const Marker = styled.span<{ $before?: boolean }>`
  position: absolute;
  display: flex;
  align-items: center;
  gap: 4px;
  color: ${C.dark};
  transform: translate(${(p) => (p.$before ? '-100%' : '0')}, -50%);
`;

const Note = styled.strong`
  position: absolute;
  color: #f00;
  font-size: 42px;
  line-height: 48px;
  font-weight: 700;
  transform: translateY(-50%);
  white-space: nowrap;
`;

const Axis = styled.div<{ $top: number; $bottom: number }>`
  position: relative;
  display: flex;
  flex-direction: column;
  justify-content: space-between;
  padding: ${(p) => p.$top}px 0 ${(p) => p.$bottom}px 9px;
  color: ${C.grey};
`;

const Tick = styled.span<{ $star?: boolean }>`
  position: relative;
  width: 50px;
  text-align: center;
  white-space: nowrap;
  &::after {
    content: '';
    display: ${(p) => (p.$star ? 'block' : 'none')};
    position: absolute;
    left: 53px;
    top: 5px;
    width: 6px;
    height: 6px;
    background: #ec9f2a;
    transform: rotate(45deg);
  }
`;

const PriceTag = styled.div`
  position: absolute;
  left: -1px;
  right: 2px;
  transform: translateY(-10px);
  display: flex;
  flex-direction: column;
  gap: 1px;
  color: #fff;
  font-weight: 500;
  line-height: 20px;
  text-align: center;
`;

const TagRow = styled.span`
  background: ${C.red};
`;

const TimeAxis = styled.div`
  display: grid;
  grid-template-columns: minmax(0, 1fr) 71px;
  align-items: center;
  flex: none;
  height: 24px;
  margin-bottom: 4px;
  padding-bottom: 4px;
  border-bottom: 1px solid ${C.line};
  color: ${C.grey};
`;

const Days = styled.div`
  display: grid;
  grid-template-columns: repeat(16, minmax(0, 1fr));
  margin: 0 -20px 0 40px;
  text-align: center;
`;

const AxisLinks = styled.div`
  display: flex;
  gap: 9px;
  padding-left: 31px;
`;

const AxisLink = styled.a`
  color: ${C.blue};
  text-decoration: none;
`;

const CircleChevron = ({ side }: { side?: boolean }) => (
  <IconButton aria-label="展开">
    <svg width="16" height="16" viewBox="0 0 16 16" fill="none" stroke={C.grey}>
      <circle cx="8" cy="8" r="7.3" />
      <path d={side ? 'M6.500 4.500L10 8l-3.500 3.500' : 'M4.500 6.500L8 10l3.500-3.500'} />
    </svg>
  </IconButton>
);

const OHLC = [
  ['开', '68863.24'], ['高', '68865.91'], ['低', '68541.01'], ['收', '68547.53'],
  ['涨幅', '-0.46%(-315.74)'], ['振幅', '0.47%'],
];

const pct = (v: number, of: number) => `${(v / of) * 100}%`;

function PriceChart() {
  const prices = Array.from({ length: 19 }, (_, i) => 74000 - i * 500);
  const starred = [74000, 73000, 67000, 66000];
  return (
    <Pane $share={PRICE_H}>
      <Plot>
        <PlotSvg viewBox={`0 0 ${PLOT_W} ${PRICE_H}`} preserveAspectRatio="none">
          {candles.map((c, i) => {
            const x = Math.floor(xAt(i));
            const color = c.up ? C.green : C.red;
            const h = Math.max(1, c.bottom - c.top);
            return (
              <g key={i} fill={color}>
                <rect x={x} y={c.high} width="1" height={Math.max(0, c.top - c.high)} />
                <rect x={x} y={c.bottom} width="1" height={Math.max(0, c.low - c.bottom)} />
                {c.up && h > 2
                  ? <rect x={x - 2.5} y={c.top + 0.5} width="6" height={h} fill="none" stroke={color} />
                  : <rect x={x - 3} y={c.top} width="7" height={h + (h < 3 ? 1 : 0)} />}
              </g>
            );
          })}
          <polyline points={average('fast')} fill="none" stroke={C.cyan} strokeWidth="1.2" />
          <polyline points={average('slow')} fill="none" stroke={C.orange} strokeWidth="1.2" />
        </PlotSvg>
        <Legend $top={2}>
          <LegendLine>
            <CircleChevron />
            <span>2024-11-04 15:30</span>
            {OHLC.map(([k, v]) => <span key={k}>{k}<Value $color={C.red}>{v}</Value></span>)}
          </LegendLine>
          <CircleChevron side />
        </Legend>
        <Marker $before style={{ left: pct(1298, PLOT_W), top: pct(48, PRICE_H) }}>
          73624.98
          <svg width="8" height="7" viewBox="0 0 8 7"><path d="M0 3.500h7M4.500 1L7 3.500 4.500 6" fill="none" stroke={C.dark} strokeWidth="1.3" /></svg>
        </Marker>
        <Marker style={{ left: pct(421, PLOT_W), top: pct(719, PRICE_H) }}>
          <svg width="8" height="7" viewBox="0 0 8 7"><path d="M8 3.500H1M3.500 1L1 3.500 3.500 6" fill="none" stroke={C.dark} strokeWidth="1.3" /></svg>
          65149.51
        </Marker>
      </Plot>
      <Axis $top={11} $bottom={19}>
        <PlotSvg viewBox={`0 0 71 ${PRICE_H}`} preserveAspectRatio="none">
          <path d={`M.5 0v${PRICE_H}`} stroke={C.line} />
          <path d={profilePath(PROFILE_SELL)} fill="#f79297" />
          <path d={profilePath(PROFILE_BUY)} fill="#82d7be" />
          {prices.map((p, i) => <path key={p} d={`M0 ${18.5 + i * 39.6}h5`} stroke="#fff" />)}
        </PlotSvg>
        {prices.map((p) => <Tick key={p} $star={starred.includes(p)}>{p.toFixed(2)}</Tick>)}
        <PriceTag style={{ top: pct(451, PRICE_H) }}>
          <TagRow>68547.53</TagRow>
          <TagRow>01:02:47</TagRow>
        </PriceTag>
      </Axis>
    </Pane>
  );
}

function MacdChart() {
  const dea = DIF.map((d, i) => d - HISTOGRAM[i] / 2);
  const levels = Array.from({ length: 9 }, (_, i) => 1000 - i * 200);
  return (
    <Pane $share={MACD_H}>
      <Plot>
        <PlotSvg viewBox={`0 0 ${PLOT_W} ${MACD_H}`} preserveAspectRatio="none">
          {HISTOGRAM.map((v, i) => {
            const color = v > 0 ? C.green : C.red;
            const h = Math.max(1, Math.round(Math.abs(v) / 3));
            const y = v > 0 ? ZERO_Y - h : ZERO_Y;
            const x = Math.floor(xAt(i)) - 3;
            const solid = (i > 0 && v < HISTOGRAM[i - 1]) || h < 3;
            return solid
              ? <rect key={i} x={x} y={y} width="7" height={h} fill={color} />
              : <rect key={i} x={x + 0.5} y={y + 0.5} width="6" height={h - 1} fill="none" stroke={color} />;
          })}
          <polyline points={macdLine(DIF)} fill="none" stroke="#4ad6b8" strokeWidth="1.2" />
          <polyline points={macdLine(dea)} fill="none" stroke={C.amber} strokeWidth="2.2" strokeLinejoin="round" />
          <path d="M1679 406L1998 357.500" stroke="#f00" strokeWidth="3.6" strokeDasharray="10 5" />
          <path d="M2016 354l-23-4.500 7 7-5 9.500z" fill="#f00" />
        </PlotSvg>
        <Legend $top={1}>
          <LegendLine>
            <CircleChevron />
            <Title><Icon name="bell" size={13} weight={1.4} />MACD(12,26,9)</Title>
            <Series $color="#33cfb0">DIF:-86.90</Series>
            <Series $color={C.amber}>DEA:-154.47</Series>
            <Series $color={C.green}>MACD:135.14</Series>
          </LegendLine>
        </Legend>
        <Note style={{ left: pct(2069, PLOT_W), top: pct(330, MACD_H) }}>线背离</Note>
      </Plot>
      <Axis $top={28} $bottom={13}>
        {levels.map((l) => <Tick key={l}>{l.toFixed(2)}</Tick>)}
      </Axis>
    </Pane>
  );
}

const DAYS = [
  ...Array.from({ length: 10 }, (_, i) => `10月 ${22 + i}`),
  ...Array.from({ length: 6 }, (_, i) => `11月 ${i + 1}`),
];

export default function App() {
  return (
    <Page>
      <GlobalStyle />
      <Header />
      <Body>
        <LeftNav />
        <Main>
          <Toolbars />
          <PriceChart />
          <MacdChart />
          <TimeAxis>
            <Days>{DAYS.map((d) => <span key={d}>{d}</span>)}</Days>
            <AxisLinks>
              <AxisLink href="#chips">筹</AxisLink>
              <AxisLink href="#liquidation">爆</AxisLink>
            </AxisLinks>
          </TimeAxis>
        </Main>
        <RightRail />
      </Body>
    </Page>
  );
}
